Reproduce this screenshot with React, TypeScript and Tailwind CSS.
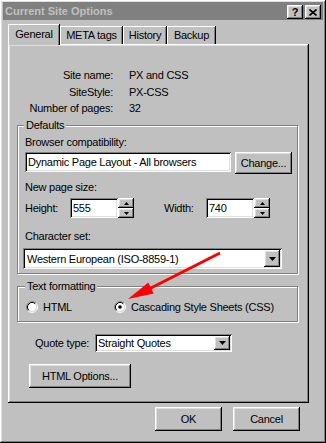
import React from "react";

const raised =
  "shadow-[inset_-1px_-1px_#000,inset_1px_1px_#fff,inset_-2px_-2px_#808080,inset_2px_2px_#dfdfdf]";
const sunken =
  "shadow-[inset_1px_1px_#808080,inset_-1px_-1px_#fff,inset_2px_2px_#000,inset_-2px_-2px_#dfdfdf]";
const etched = "border border-[#808080] shadow-[inset_1px_1px_#fff,1px_1px_#fff]";

function Radio({ checked }: { checked?: boolean }) {
  return (
    <svg width="12" height="12" viewBox="0 0 12 12" className="shrink-0">
      <circle cx="6" cy="6" r="4.2" fill="#fff" />
      <path d="M2.11 9.89 A5.5 5.5 0 0 1 9.89 2.11" fill="none" stroke="#808080" strokeWidth="1" />
      <path d="M9.89 2.11 A5.5 5.5 0 0 1 2.11 9.89" fill="none" stroke="#fff" strokeWidth="1" />
      <path d="M2.82 9.18 A4.5 4.5 0 0 1 9.18 2.82" fill="none" stroke="#000" strokeWidth="1" />
      <path d="M9.18 2.82 A4.5 4.5 0 0 1 2.82 9.18" fill="none" stroke="#dfdfdf" strokeWidth="1" />
      {checked && <circle cx="6" cy="6" r="1.8" fill="#000" />}
    </svg>
  );
}

function DownArrow() {
  return (
    <svg width="7" height="4" viewBox="0 0 7 4">
      <polygon points="0,0 7,0 3.5,4" fill="#000" />
    </svg>
  );
}

function Spinner() {
  return (
    <div className="flex w-[16px] flex-col">
      <div className={`flex h-[10px] items-center justify-center bg-[#c0c0c0] ${raised}`}>
        <svg width="5" height="3" viewBox="0 0 5 3">
          <polygon points="2.5,0 5,3 0,3" fill="#000" />
        </svg>
      </div>
      <div className={`flex h-[10px] items-center justify-center bg-[#c0c0c0] ${raised}`}>
        <svg width="5" height="3" viewBox="0 0 5 3">
          <polygon points="0,0 5,0 2.5,3" fill="#000" />
        </svg>
      </div>
    </div>
  );
}

export default function App() {
  return (
    <div
      className={`relative h-[443px] w-[326px] overflow-hidden bg-[#c0c0c0] px-[3px] pt-[2px] font-['Liberation_Sans',Arial,sans-serif] text-[11px] leading-[16px] tracking-[-0.25px] text-black ${raised}`}
    >
      {/* Title bar */}
      <div className="flex h-[18px] items-center bg-[#808080] pl-[2px] pr-[2px]">
        <span className="text-[11px] font-bold tracking-[0px] text-[#c0c0c0]">Current Site Options</span>
        <div className="ml-auto mt-[2px] flex gap-[2px]">
          <div className={`flex h-[14px] w-[16px] items-center justify-center bg-[#c0c0c0] text-[11px] font-bold leading-[14px] ${raised}`}>
            ?
          </div>
          <div className={`flex h-[14px] w-[16px] items-center justify-center bg-[#c0c0c0] ${raised}`}>
            <svg width="8" height="7" viewBox="0 0 8 7">
              <path d="M0.5 0.5 L7.5 6.5 M7.5 0.5 L0.5 6.5" stroke="#000" strokeWidth="1.6" />
            </svg>
          </div>
        </div>
      </div>

      {/* Tabs + panel */}
      <div className="ml-[5px] mt-[4px] w-[301px]">
        <div className="flex h-[20px] items-end">
          <div className="relative z-10 -mb-[1px] flex h-[21px] w-[52px] items-start justify-center bg-[#c0c0c0] pt-[2px] shadow-[inset_-1px_0_#000,inset_1px_1px_#fff,inset_-2px_0_#808080]">
            General
          </div>
          <div className="flex h-[18px] w-[63px] items-center justify-center shadow-[inset_-1px_0_#000,inset_1px_1px_#fff,inset_-2px_0_#808080]">
            META tags
          </div>
          <div className="flex h-[18px] w-[44px] items-center justify-center shadow-[inset_-1px_0_#000,inset_1px_1px_#fff,inset_-2px_0_#808080]">
            History
          </div>
          <div className="flex h-[18px] w-[49px] items-center justify-center shadow-[inset_-1px_0_#000,inset_1px_1px_#fff,inset_-2px_0_#808080]">
            Backup
          </div>
        </div>

        <div className={`flex h-[359px] flex-col ${raised}`}>
          {/* Site info */}
          <div className="mt-[23px] flex flex-col">
            <div className="flex h-[16px] items-center">
              <span className="w-[105px] text-right">Site name:</span>
              <span className="ml-[16px]">PX and CSS</span>
            </div>
            <div className="mt-[1px] flex h-[16px] items-center">
              <span className="w-[105px] text-right">SiteStyle:</span>
              <span className="ml-[16px]">PX-CSS</span>
            </div>
            <div className="flex h-[16px] items-center">
              <span className="w-[105px] text-right">Number of pages:</span>
              <span className="ml-[16px]">32</span>
            </div>
          </div>

          {/* Defaults group */}
          <div className={`relative ml-[9px] mt-[9px] flex h-[149px] w-[281px] flex-col pl-[7px] ${etched}`}>
            <span className="absolute -top-[9px] left-[6px] bg-[#c0c0c0] px-[2px]">Defaults</span>
            <div className="mt-[8px] h-[16px]">Browser compatibility:</div>
            <div className="mt-[2px] flex items-start gap-[4px]">
              <div className={`flex h-[20px] w-[206px] items-center bg-white pl-[3px] ${sunken}`}>
                Dynamic Page Layout - All browsers
              </div>
              <div className={`flex h-[22px] w-[57px] items-center justify-center bg-[#c0c0c0] ${raised}`}>
                Change...
              </div>
            </div>
            <div className="mt-[5px] h-[16px]">New page size:</div>
            <div className="mt-[3px] flex h-[20px] items-center">
              <span className="w-[45px]">Height:</span>
              <div className={`flex h-[20px] w-[48px] items-center bg-white pl-[3px] ${sunken}`}>555</div>
              <Spinner />
              <span className="ml-[30px] w-[42px]">Width:</span>
              <div className={`flex h-[20px] w-[48px] items-center bg-white pl-[3px] ${sunken}`}>740</div>
              <Spinner />
            </div>
            <div className="mt-[10px] h-[16px]">Character set:</div>
            <div className={`-ml-[2px] mt-[4px] flex h-[21px] w-[259px] items-center bg-white pl-[4px] pr-[2px] ${sunken}`}>
              <span>Western European (ISO-8859-1)</span>
              <div className={`ml-auto flex h-[17px] w-[16px] items-center justify-center bg-[#c0c0c0] ${raised}`}>
                <DownArrow />
              </div>
            </div>
          </div>

          {/* Text formatting group */}
          <div className={`relative ml-[9px] mt-[12px] flex h-[36px] w-[281px] flex-col pl-[8px] ${etched}`}>
            <span className="absolute -top-[9px] left-[7px] bg-[#c0c0c0] px-[2px]">Text formatting</span>
            <div className="mt-[12px] flex h-[16px] items-center">
              <div className="flex w-[88px] items-center gap-[5px]">
                <Radio />
                <span>HTML</span>
              </div>
              <div className="flex items-center gap-[5px]">
                <Radio checked />
                <span>Cascading Style Sheets (CSS)</span>
              </div>
            </div>
          </div>

          {/* Quote type */}
          <div className="ml-[27px] mt-[12px] flex h-[18px] items-center">
            <span className="w-[60px]">Quote type:</span>
            <div className={`flex h-[18px] w-[137px] items-center bg-white pl-[3px] pr-[2px] ${sunken}`}>
              <span>Straight Quotes</span>
              <div className={`ml-auto flex h-[14px] w-[16px] items-center justify-center bg-[#c0c0c0] ${raised}`}>
                <DownArrow />
              </div>
            </div>
          </div>

          {/* HTML Options */}
          <div className={`ml-[21px] mt-[12px] flex h-[24px] w-[102px] items-center justify-center bg-[#c0c0c0] ${raised}`}>
            HTML Options...
          </div>
        </div>
      </div>

      {/* Bottom buttons */}
      <div className="ml-[152px] mt-[4px] flex gap-[11px]">
        <div className={`flex h-[24px] w-[67px] items-center justify-center ${raised}`}>OK</div>
        <div className={`flex h-[24px] w-[67px] items-center justify-center ${raised}`}>Cancel</div>
      </div>

      {/* Red annotation arrow */}
      <svg className="pointer-events-none absolute left-0 top-0" width="326" height="443" viewBox="0 0 326 443">
        <line x1="220" y1="253" x2="150" y2="288.5" stroke="#ff0000" strokeWidth="3" />
        <polygon points="128,299 148.3,282.4 153.7,293.4" fill="#ff0000" />
      </svg>
    </div>
  );
}
